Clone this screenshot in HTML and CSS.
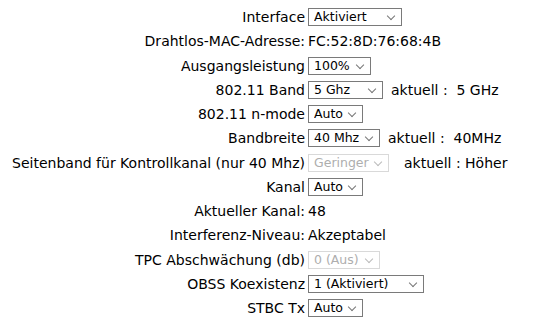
FILE: index.html
```html
<!DOCTYPE html>
<html lang="de">
<head>
  <meta charset="UTF-8">
  <title>WLAN Einstellungen</title>
  <link rel="stylesheet" href="styles.css">
</head>
<body>

  <div class="settings">
    <div class="label">Interface</div>
    <div class="value">
      <span class="select w94"><select><option>Aktiviert</option></select></span>
    </div>

    <div class="label">Drahtlos-MAC-Adresse:</div>
    <div class="value">FC:52:8D:76:68:4B</div>

    <div class="label">Ausgangsleistung</div>
    <div class="value">
      <span class="select w63"><select><option>100%</option></select></span>
    </div>

    <div class="label">802.11 Band</div>
    <div class="value">
      <span class="select w75"><select><option>5 Ghz</option></select></span>
      <span class="note">aktuell :&nbsp; 5 GHz</span>
    </div>

    <div class="label">802.11 n-mode</div>
    <div class="value">
      <span class="select w55"><select><option>Auto</option></select></span>
    </div>

    <div class="label">Bandbreite</div>
    <div class="value">
      <span class="select w72"><select><option>40 Mhz</option></select></span>
      <span class="note">aktuell :&nbsp; 40MHz</span>
    </div>

    <div class="label">Seitenband für Kontrollkanal (nur 40 Mhz)</div>
    <div class="value">
      <span class="select w81 off"><select disabled><option>Geringer</option></select></span>
      <span class="note wide">aktuell : Höher</span>
    </div>

    <div class="label">Kanal</div>
    <div class="value">
      <span class="select w55"><select><option>Auto</option></select></span>
    </div>

    <div class="label">Aktueller Kanal:</div>
    <div class="value">48</div>

    <div class="label">Interferenz-Niveau:</div>
    <div class="value">Akzeptabel</div>

    <div class="label">TPC Abschwächung (db)</div>
    <div class="value">
      <span class="select w72 off"><select disabled><option>0 (Aus)</option></select></span>
    </div>

    <div class="label">OBSS Koexistenz</div>
    <div class="value">
      <span class="select w116"><select><option>1 (Aktiviert)</option></select></span>
    </div>

    <div class="label">STBC Tx</div>
    <div class="value">
      <span class="select w55"><select><option>Auto</option></select></span>
    </div>
  </div>

</body>
</html>
```

FILE: styles.css
```css
* { margin:0; padding:0; box-sizing:border-box; }
html, body { background:#fff; color:#000; }
body { font-family:"DejaVu Sans", Verdana, sans-serif; font-size:14px; }

.settings {
  display:grid;
  grid-template-columns:298px max-content;
  grid-auto-rows:24.25px;
  column-gap:3px;
  align-items:center;
  padding:5px 0 0 7px;
}
.label { text-align:right; white-space:nowrap; }
.value { display:flex; align-items:center; white-space:nowrap; }

/* select boxes */
.select { position:relative; display:inline-block; height:18px; }
.select select {
  appearance:none;
  -webkit-appearance:none;
  width:100%;
  height:18px;
  border:1px solid #7a7a7a;
  border-radius:0;
  background:#fff;
  color:#000;
  font-family:inherit;
  font-size:12.5px;
  line-height:16px;
  padding:0 0 0 5px;
  outline:none;
}
.select::after {
  content:"";
  position:absolute;
  right:8px;
  top:5px;
  width:5px;
  height:5px;
  border-right:1px solid #777;
  border-bottom:1px solid #777;
  transform:rotate(45deg);
  pointer-events:none;
}
.select.off select { border-color:#c9c9c9; color:#8c8c8c; }
.select.off::after { border-color:#bbb; }

.w55 { width:55px; }
.w63 { width:63px; }
.w72 { width:72px; }
.w75 { width:75px; }
.w81 { width:81px; }
.w94 { width:94px; }
.w116 { width:116px; }

.note { margin-left:8px; }
.note.wide { margin-left:15px; }
```
